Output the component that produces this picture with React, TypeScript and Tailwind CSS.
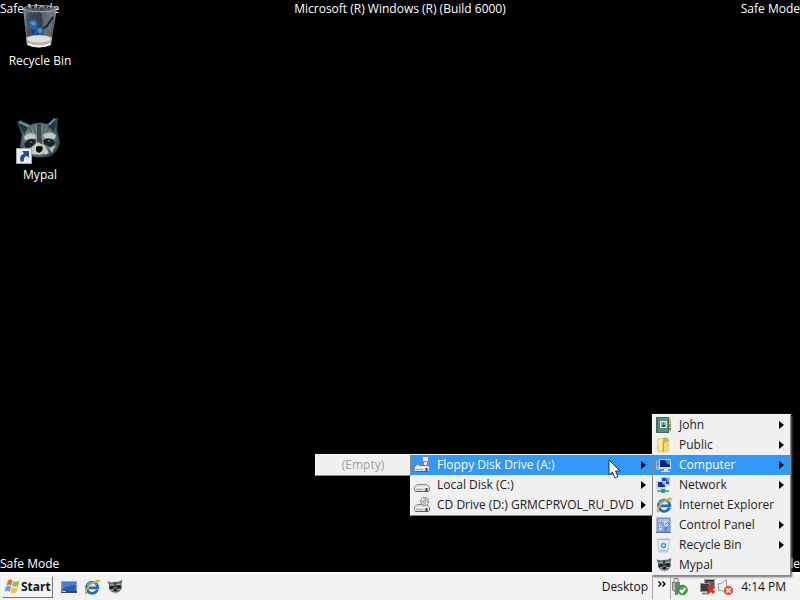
import type { ReactNode } from "react";

function FlagIcon() {
  return (
    <svg viewBox="0 0 16 16" className="h-4 w-4 shrink-0" aria-hidden="true">
      <path d="M4 1.5 Q6 -.5 8.600 1.6 L7.2 6.6 Q5 5 2.4 6.6Z" fill="#e0703c" />
      <path d="M9.4 2 Q12 3.8 15.4 1.8 L14 7 Q11 8.6 8 7Z" fill="#93bd4e" />
      <path d="M2.2 7.6 Q4.700 6 7 7.7 L5.6 12.800 Q3.2 11 .4 12.6Z" fill="#5ba5d6" />
      <path d="M7.800 8.1 Q10.800 9.8 13.8 8.1 L12.4 13.4 Q9.200 15 6.4 13.2Z" fill="#eec04a" />
    </svg>
  );
}

function ShowDesktopIcon() {
  return (
    <svg viewBox="0 0 16 16" className="h-4 w-4" aria-hidden="true">
      <rect x="0" y="2" width="16" height="12" fill="#8fa3bb" />
      <rect x="1" y="3" width="14" height="9" fill="#2c5db8" />
      <path d="M1 3H15V6Q8 6 1 10Z" fill="#4a80d0" />
      <rect x="0" y="12" width="16" height="2" fill="#39465c" />
      <rect x="1" y="12" width="4" height="1" fill="#c5d3e4" />
    </svg>
  );
}

function ExplorerIcon() {
  return (
    <svg viewBox="0 0 16 16" className="h-4 w-4" aria-hidden="true">
      <path d="M13.4 10.8A5.6 5.6 0 1 1 13.8 8.8H4.5" fill="none" stroke="#1d6fc4" strokeWidth="2.8" />
      <path d="M3.2 6.4A5.4 5.4 0 0 1 12.6 5.6" fill="none" stroke="#59b7f0" strokeWidth="1.2" />
      <path d="M1.4 15.400C-.8 12.4 3.4 6.4 8.6 3.2C12 .6 15.6-.4 15.800 1.8C15.9 3 15 4 14.4 4.8C14.8 2.4 12.6 2.4 9 4.8C4.600 8 1.400 12.600 3.400 14.400C2.800 15.4 1.900 15.600 1.400 15.400Z" fill="#ecb326" />
    </svg>
  );
}

function RaccoonSmallIcon() {
  return (
    <svg viewBox="0 0 16 16" className="h-4 w-4" aria-hidden="true">
      <path d="M.5 2.200L4.500 3.400Q8 2.400 11.500 2.800L15.500 1L14.400 5.600L15 8.6Q13.400 13 8.800 14.500Q4 13.500 2 9.800L2 6Z" fill="#5d686c" />
      <path d="M2.4 8Q4.500 5.800 7 7L6 9.800L3 10.400Z M9 7Q12 5.500 14 7L13.300 9.500L10.500 9.800Z" fill="#191e20" />
      <path d="M3 6L7 5.800M9.500 5.600L13.500 5M4 11L6.500 10.800M10.500 10.800L13 10.300" stroke="#b9c1c1" />
      <path d="M7.200 3.500L8.800 3.500L8.400 9H7.600Z" fill="#282f32" />
      <ellipse cx="8.400" cy="11.200" rx="1.600" ry="1.200" fill="#0b0e0f" />
      <path d="M6.400 13Q8.300 14.200 10.500 13" stroke="#c3caca" fill="none" />
    </svg>
  );
}

function UserIcon() {
  return (
    <svg viewBox="0 0 16 16" className="h-4 w-4" aria-hidden="true">
      <rect x="12" y="1" width="3" height="14" fill="#d6cba0" />
      <path d="M14 3v3" stroke="#d8a33c" strokeWidth="2" />
      <path d="M14 7v3" stroke="#70ad6b" strokeWidth="2" />
      <path d="M14 11v2" stroke="#c9573e" strokeWidth="2" />
      <rect x="0" y="0" width="13" height="16" fill="#41705f" />
      <rect x="2" y="1" width="10" height="14" fill="#559080" />
      <rect x="4" y="4" width="7" height="7" fill="#d5e6df" />
      <rect x="5" y="5" width="5" height="5" fill="#8bb9aa" />
      <path d="M6 10V8h3v2zM7 6h1v2H7z" fill="#315c50" />
    </svg>
  );
}

function FolderIcon() {
  return (
    <svg viewBox="0 0 16 16" className="h-4 w-4" aria-hidden="true">
      <path d="M6 1L11 .5L13 3V14L7 15.500Z" fill="#cdb055" />
      <path d="M1 2L6 .5L8 3V15L3 15.500L1 13Z" fill="#e9cf71" />
      <path d="M2 3L6 2V14L3 14.500Z" fill="#fae9a2" />
      <path d="M8 6L12 4L13.500 6V13L8 15.500Z" fill="#efd67b" />
      <path d="M7.500 4V15" stroke="#c0a048" />
    </svg>
  );
}

function ComputerIcon() {
  return (
    <svg viewBox="0 0 16 16" className="h-4 w-4" aria-hidden="true">
      <rect x="0" y="4" width="4" height="9" fill="#9fb0c4" />
      <path d="M1 6h2M1 8h2" stroke="#6b7787" />
      <rect x="3" y="2" width="12" height="10" fill="#cfdae8" />
      <rect x="4" y="3" width="10" height="7" fill="#10238b" />
      <path d="M9 3h5v5q-4-1-5-5Z" fill="#4f7fe2" />
      <path d="M8 12h4v2h2v1H5v-1h3Z" fill="#e4e4e2" />
    </svg>
  );
}

function NetworkIcon() {
  return (
    <svg viewBox="0 0 16 16" className="h-4 w-4" aria-hidden="true">
      <rect x="5" y="0" width="9" height="9" fill="#c2cdd8" />
      <rect x="6" y="1" width="7" height="6" fill="#2549ad" />
      <path d="M10 1h3v4q-3-1-3-4Z" fill="#6c9ee7" />
      <rect x="0" y="4" width="10" height="8" fill="#c9d4df" />
      <rect x="2" y="5" width="7" height="5" fill="#14318f" />
      <path d="M6 5h3v3q-3 0-3-3Z" fill="#7ba9e9" />
      <path d="M5 12h2v2H5Z" fill="#8e989e" />
      <path d="M1 14h12" stroke="#4bbb88" strokeWidth="2" />
      <rect x="5" y="12" width="4" height="4" fill="#2fa274" />
    </svg>
  );
}

function ControlPanelIcon() {
  return (
    <svg viewBox="0 0 16 16" className="h-4 w-4" aria-hidden="true">
      <rect x="1" y="1" width="13" height="14" fill="#87a6df" stroke="#7189c0" />
      <rect x="2" y="2" width="11" height="3" fill="#a9c0ee" />
      <path d="M3 7h3v3H3zM3 11h3v2H3zM8 4h4v5H8z" fill="#d3def6" />
      <path d="M9 8l3-3M4 9l2-2M8 11h4M8 13h3" stroke="#4d6bc4" />
      <path d="M0 15.500H15" stroke="#5a6b98" />
    </svg>
  );
}

function BinSmallIcon() {
  return (
    <svg viewBox="0 0 16 16" className="h-4 w-4" aria-hidden="true">
      <path d="M1.500 2H13.500L12 15H3Z" fill="#e4edf2" stroke="#b6c5cf" />
      <path d="M1.500 2.500H13.500" stroke="#a3b6c2" />
      <circle cx="7.500" cy="8.500" r="2" fill="none" stroke="#4a91c8" strokeWidth="1.400" />
      <path d="M4 13.500H11" stroke="#b9c4cb" strokeWidth="2" />
    </svg>
  );
}

function DriveBody() {
  return (
    <>
      <path d="M3 7.500H12.500L15.500 10V13.500L14.500 14.500H1.500L.5 13.500V10Z" fill="#dcdcdc" stroke="#8a8a8a" />
      <path d="M1 10.500H15" stroke="#f8f8f8" />
      <path d="M2 12.500H9" stroke="#b0b0b0" />
      <path d="M12.500 11V14" stroke="#444444" strokeWidth="2" />
      <path d="M1.500 14.500H14.500" stroke="#606060" />
    </>
  );
}

function FloppyIcon() {
  return (
    <svg viewBox="0 0 16 16" className="h-4 w-4" aria-hidden="true">
      <DriveBody />
      <rect x="8" y="0" width="7" height="8" fill="#7684c4" />
      <rect x="9" y="0" width="5" height="4" fill="#f2f2f8" />
      <rect x="10" y="5" width="3" height="3" fill="#e6e8f0" />
      <path d="M5 8.500H14" stroke="#d05b60" />
    </svg>
  );
}

function DiskIcon() {
  return (
    <svg viewBox="0 0 16 16" className="h-4 w-4" aria-hidden="true">
      <DriveBody />
    </svg>
  );
}

function DvdIcon() {
  return (
    <svg viewBox="0 0 16 16" className="h-4 w-4" aria-hidden="true">
      <DriveBody />
      <circle cx="10.500" cy="4.500" r="4" fill="#d0d0d0" stroke="#858585" />
      <path d="M10.500 4.500L8 1.500M10.500 4.500L13.500 7" stroke="#fafafa" strokeWidth="1.500" />
      <circle cx="10.500" cy="4.500" r="1.200" fill="#ffffff" stroke="#777777" />
    </svg>
  );
}

function RecycleBinLarge() {
  return (
    <svg viewBox="0 0 36 46" className="h-[46px] w-9" aria-hidden="true">
      <defs>
        <linearGradient id="glass" x1="0" x2="1">
          <stop offset="0" stopColor="#a9b3ba" stopOpacity="0.900" />
          <stop offset="0.150" stopColor="#56626d" stopOpacity="0.800" />
          <stop offset="0.550" stopColor="#46515e" stopOpacity="0.750" />
          <stop offset="0.900" stopColor="#6b7680" stopOpacity="0.850" />
          <stop offset="1" stopColor="#abb4b9" stopOpacity="0.900" />
        </linearGradient>
      </defs>
      <path d="M1 3L5 40Q17 45 29 40L35 3Z" fill="url(#glass)" />
      <path d="M20 6H32L28 31H21Z" fill="#8691a0" opacity="0.450" />
      <path d="M31 12L25 21L20 24" stroke="#162331" strokeWidth="2" fill="none" />
      <path d="M7 16L12 14L16 18L15 23L20 22L22 27L18 31L15 28L12 32L8 29L10 24L6 22Z" fill="#2a61a8" />
      <path d="M8 17L12 16L14 19L11 21ZM16 24L19 23L20 27L17 28Z" fill="#5c92cc" />
      <path d="M10 24L14 25L12 30L9 28Z" fill="#123d81" />
      <path d="M4 32Q17 28 30 32L29 40Q17 45 5 40Z" fill="#aeb1ad" />
      <ellipse cx="17" cy="34" rx="12" ry="3.500" fill="#dfe0da" />
      <path d="M6 39Q17 43.500 28 39" stroke="#f1f1ea" strokeWidth="2" fill="none" />
      <ellipse cx="18" cy="3.500" rx="16.500" ry="3" fill="#343c43" fillOpacity="0.300" stroke="#98a4aa" />
    </svg>
  );
}

function RaccoonLarge() {
  return (
    <svg viewBox="0 0 48 48" className="h-12 w-12" aria-hidden="true">
      <defs>
        <radialGradient id="fur" cx="0.500" cy="0.500">
          <stop offset="0" stopColor="#9aa09c" />
          <stop offset="0.600" stopColor="#6a7c80" />
          <stop offset="1" stopColor="#2b4650" />
        </radialGradient>
      </defs>
      <path d="M1 5L5 3L14 8Q22 4 31 7L38 1L42 1L41 13L44 25Q43 34 35 39Q26 42 17 40Q8 37 4 29L6 18Z" fill="url(#fur)" />
      <path d="M3 6L12 11L8 17Z M39 3L32 9L38 15Z" fill="#1c3541" />
      <path d="M3 5L13 9M39 2L33 8" stroke="#7ca0a9" strokeWidth="1.500" />
      <path d="M21 7L25 7L26 27L21 28Z" fill="#344950" />
      <path d="M17 9L20 17M29 9L27 17M13 11L16 15M33 11L30 15" stroke="#4b6269" strokeWidth="1.500" />
      <path d="M8 20Q14 13 20 19L18 22L9 23Z M27 18Q34 13 40 18L39 22L29 21Z" fill="#c0c8c2" />
      <path d="M8 27Q13 19 20 23L19 27Q15 31 10 31Z M27 23Q34 19 39 25Q39 28 34 30L28 27Z" fill="#182329" />
      <path d="M16 30L22 25L29 29L33 36Q25 41 16 37Z" fill="#c6c9c1" />
      <path d="M8 31L15 31L15 37Z M33 31L40 28L36 36Z" fill="#b0b7b3" />
      <path d="M20 30Q23 28 27 30L26 34L23 36L20 34Z" fill="#070b0d" />
      <path d="M19 38Q23 39 29 37" stroke="#4c5a5e" fill="none" />
      <circle cx="15" cy="25" r="1" fill="#667b81" />
      <circle cx="33" cy="24" r="1" fill="#667b81" />
      <path d="M.5 31.500H15.500V46.500H.5Z" fill="#e9edf1" stroke="#a5a9ac" />
      <path d="M5 45Q2 39 8 36.500L6 34H13V41L11 39Q7 40 8 44Z" fill="#204f9e" />
    </svg>
  );
}

function SafelyRemoveIcon() {
  return (
    <svg viewBox="0 0 18 18" className="h-[18px] w-[18px]" aria-hidden="true">
      <path d="M3 .500h4v4H3z" fill="#e2e2e2" stroke="#888888" />
      <path d="M1 4h8v8l-2 2v3H4v-3l-3-2z" fill="#7b7f7b" />
      <path d="M3 5v7" stroke="#b6bab6" strokeWidth="2" />
      <circle cx="11.500" cy="12" r="4.800" fill="#3fa640" stroke="#2b8a31" />
      <path d="M9 12L11 14.200L14.500 9.800" stroke="#ffffff" strokeWidth="2" fill="none" />
    </svg>
  );
}

function NetworkOffIcon() {
  return (
    <svg viewBox="0 0 18 18" className="h-[18px] w-[18px]" aria-hidden="true">
      <rect x="5.500" y="1.500" width="10" height="9" fill="#5a5a5a" stroke="#aaaaaa" />
      <path d="M6 2.500H15" stroke="#303030" />
      <rect x="1.500" y="5.500" width="9" height="8" fill="#3b3b3b" stroke="#999999" />
      <path d="M3 15.500h7" stroke="#888888" strokeWidth="2" />
      <path d="M9 8L15 15M15 8L9 15" stroke="#dc2d24" strokeWidth="3" />
    </svg>
  );
}

function MutedIcon() {
  return (
    <svg viewBox="0 0 18 18" className="h-[18px] w-[18px]" aria-hidden="true">
      <path d="M1.500 5.500H4.500L9.500 1.500V15.500L4.500 12.500H1.500Z" fill="#efefef" stroke="#9b9b9b" />
      <circle cx="11.500" cy="12.500" r="4.200" fill="#df6350" stroke="#c85140" />
      <path d="M9.500 10.500L13.500 14.500M13.500 10.500L9.500 14.500" stroke="#ffffff" strokeWidth="1.500" />
    </svg>
  );
}

function Cursor() {
  return (
    <svg viewBox="0 0 14 21" className="absolute right-[30px] top-1 z-20 h-[21px] w-[14px]" aria-hidden="true">
      <path d="M1 1V16L4.500 13L7 19L10 17.500L7.500 12H12Z" fill="#ffffff" stroke="#223048" />
    </svg>
  );
}

type ItemProps = {
  label: string;
  icon?: ReactNode;
  arrow?: boolean;
  active?: boolean;
  children?: ReactNode;
};

function MenuItem({ label, icon, arrow, active, children }: ItemProps) {
  return (
    <li className="relative">
      <button
        type="button"
        className={`flex h-5 w-full items-center pl-[3px] pr-1.5 text-left ${active ? "bg-[#3197f8] text-white" : "text-[#222222]"}`}
      >
        {icon}
        <span className="ml-[7px] flex-1 whitespace-nowrap">{label}</span>
        {arrow && (
          <svg viewBox="0 0 5 8" className="h-2 w-[5px]" aria-hidden="true">
            <path d="M0 0L5 4L0 8Z" fill="#000000" />
          </svg>
        )}
      </button>
      {children}
    </li>
  );
}

const menuFrame = "border border-t-[#f8f8f8] border-l-[#f8f8f8] border-r-[#888888] border-b-[#888888] bg-[#f0f0f0]";

function DesktopMenu() {
  return (
    <ul className={`absolute bottom-6 right-[9px] z-10 w-[139px] shadow-[1px_1px_2px_#666666] ${menuFrame}`}>
      <MenuItem label="John" icon={<UserIcon />} arrow />
      <MenuItem label="Public" icon={<FolderIcon />} arrow />
      <MenuItem label="Computer" icon={<ComputerIcon />} arrow active>
        <ul className={`absolute -top-px right-full w-[243px] ${menuFrame}`}>
          <MenuItem label="Floppy Disk Drive (A:)" icon={<FloppyIcon />} arrow active>
            <ul className={`absolute -top-px right-full w-24 text-center ${menuFrame}`}>
              <li className="h-5 leading-5 text-[#a0a0a0]">(Empty)</li>
            </ul>
            <Cursor />
          </MenuItem>
          <MenuItem label="Local Disk (C:)" icon={<DiskIcon />} arrow />
          <MenuItem label="CD Drive (D:) GRMCPRVOL_RU_DVD" icon={<DvdIcon />} arrow />
        </ul>
      </MenuItem>
      <MenuItem label="Network" icon={<NetworkIcon />} arrow />
      <MenuItem label="Internet Explorer" icon={<ExplorerIcon />} />
      <MenuItem label="Control Panel" icon={<ControlPanelIcon />} arrow />
      <MenuItem label="Recycle Bin" icon={<BinSmallIcon />} arrow />
      <MenuItem label="Mypal" icon={<RaccoonSmallIcon />} />
    </ul>
  );
}

function Taskbar() {
  return (
    <footer className="flex h-7 items-center border-t-2 border-white bg-[#f2f2f2] pl-0.5 pr-3.5 text-[#111111]">
      <button
        type="button"
        className="flex h-[22px] w-[51px] items-center gap-px border border-b-[#777777] border-l-white border-r-[#777777] border-t-white px-px font-bold"
      >
        <FlagIcon />
        Start
      </button>
      <nav className="ml-2 flex items-center gap-[7px]" aria-label="Quick Launch">
        <button type="button" aria-label="Show desktop"><ShowDesktopIcon /></button>
        <button type="button" aria-label="Internet Explorer"><ExplorerIcon /></button>
        <button type="button" aria-label="Mypal"><RaccoonSmallIcon /></button>
      </nav>
      <span className="ml-auto">Desktop</span>
      <button
        type="button"
        aria-label="Show Desktop toolbar"
        className="ml-1 flex h-6 w-[19px] justify-center border-x border-[#aaaaaa] pt-1"
      >
        <svg viewBox="0 0 8 6" className="mt-0.5 h-1.5 w-2" aria-hidden="true">
          <path d="M.5 .5L3 3L.5 5.500M4.500 .5L7 3L4.500 5.500" fill="none" stroke="#000000" strokeWidth="1.400" />
        </svg>
      </button>
      <div className="flex items-center">
        <button type="button" aria-label="Safely remove hardware"><SafelyRemoveIcon /></button>
        <button type="button" aria-label="Network disconnected" className="ml-2.5"><NetworkOffIcon /></button>
        <button type="button" aria-label="Volume muted"><MutedIcon /></button>
      </div>
      <time className="ml-1.5">4:14 PM</time>
    </footer>
  );
}

export default function App() {
  return (
    <div className="relative flex min-h-screen flex-col overflow-hidden bg-black font-['Open_Sans','Noto_Sans',sans-serif] text-[12px] leading-4 text-white">
      <header className="grid grid-cols-3 pt-px">
        <span>Safe Mode</span>
        <span className="whitespace-nowrap text-center">Microsoft (R) Windows (R) (Build 6000)</span>
        <span className="text-right">Safe Mode</span>
      </header>
      <main className="-mt-3 flex flex-1 flex-col items-start gap-12">
        <button type="button" className="flex w-20 flex-col items-center gap-0.5">
          <RecycleBinLarge />
          Recycle Bin
        </button>
        <button type="button" className="flex w-20 flex-col items-center gap-0.5">
          <RaccoonLarge />
          Mypal
        </button>
      </main>
      <div className="flex justify-between">
        <span>Safe Mode</span>
        <span>Safe Mode</span>
      </div>
      <Taskbar />
      <DesktopMenu />
    </div>
  );
}
